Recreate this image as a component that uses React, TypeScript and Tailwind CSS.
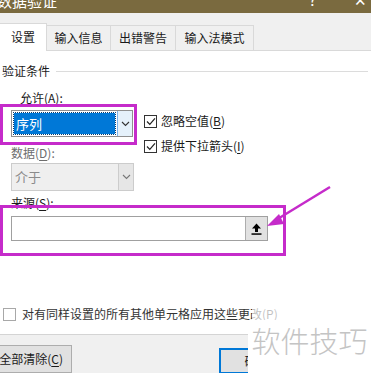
import React from 'react';

function Chevron({ color = '#333' }: { color?: string }) {
  return (
    <svg width="9" height="6" viewBox="0 0 9 6">
      <path d="M1 1 L4.5 4.5 L8 1" fill="none" stroke={color} strokeWidth="1.1" />
    </svg>
  );
}

function Check({ checked }: { checked: boolean }) {
  return (
    <span className="w-[13px] h-[13px] border border-[#333] bg-white flex items-center justify-center shrink-0">
      {checked && (
        <svg width="10" height="9" viewBox="0 0 10 9">
          <path d="M1 4.5 L3.8 7.3 L9 1.3" fill="none" stroke="#222" strokeWidth="1.2" />
        </svg>
      )}
    </span>
  );
}

function U({ c }: { c: string }) {
  return <span className="underline underline-offset-2">{c}</span>;
}

export default function App() {
  return (
    <div className="relative w-[371px] h-[373px] overflow-hidden bg-white font-['Noto_Sans_CJK_SC',sans-serif] text-[12px] text-[#1a1a1a]">
      {/* title bar */}
      <div className="h-[13px] bg-[#7a6a3f] overflow-hidden flex justify-between text-white">
        <span className="-mt-[9px] -ml-[3px] text-[15px] leading-[20px]">数据验证</span>
        <div className="flex -mt-[10px] text-[15px] leading-[20px]">
          <span className="mr-[38px]">?</span>
          <span className="mr-[4px]">✕</span>
        </div>
      </div>

      {/* tabs */}
      <div className="h-[38px] bg-[#f0f0f0] border-b border-[#d9d9d9] flex items-end">
        <div className="w-[47px] h-[28px] -mb-px bg-white border-t border-r border-[#d9d9d9] flex items-center justify-center pb-[2px]">
          设置
        </div>
        <div className="w-[64px] h-[25px] border-t border-r border-[#d9d9d9] flex items-center justify-center">输入信息</div>
        <div className="w-[65px] h-[25px] border-t border-r border-[#d9d9d9] flex items-center justify-center">出错警告</div>
        <div className="w-[78px] h-[25px] border-t border-r border-[#d9d9d9] flex items-center justify-center">输入法模式</div>
      </div>

      {/* content */}
      <div className="h-[283px] bg-white flex flex-col">
        <div className="mt-[13px] flex items-center pl-[2px] pr-[3px] h-[14px] leading-[14px]">
          <span>验证条件</span>
          <span className="flex-1 ml-[6px] border-t border-[#dcdcdc]" />
        </div>

        <div className="mt-[13px] pl-[20px] h-[14px] leading-[14px]">
          允许(<U c="A" />):
        </div>

        <div className="mt-[5px] flex pl-[11px]">
          <div className="w-[123px] flex flex-col">
            <div className="w-[122px] h-[27px] border border-[#8f8f8f] flex bg-white">
              <div className="flex-1 m-[2px] bg-[#0078d7] text-white flex items-center pl-[2px] outline-1 outline-dotted outline-[#0a3d6b] text-[13px]">
                序列
              </div>
              <div className="w-[15px] bg-[#e5f1fb] border-l border-[#7eb4ea] flex items-center justify-center">
                <Chevron />
              </div>
            </div>
            <div className="mt-[9px] h-[14px] leading-[14px] text-[#6d6d6d]">
              数据(<U c="D" />):
            </div>
            <div className="mt-[3px] w-[123px] h-[28px] border border-[#cccccc] bg-[#efefef] flex">
              <div className="flex-1 flex items-center pl-[3px] text-[#8a8a8a] text-[13px]">介于</div>
              <div className="w-[15px] border-l border-[#cccccc] bg-[#e6e6e6] flex items-center justify-center">
                <Chevron color="#777" />
              </div>
            </div>
          </div>

          <div className="ml-[10px] pt-[4px] flex flex-col gap-[11px]">
            <div className="flex items-center gap-[4px] h-[14px] leading-[14px]">
              <Check checked />
              <span>
                忽略空值(<U c="B" />)
              </span>
            </div>
            <div className="flex items-center gap-[4px] h-[14px] leading-[14px]">
              <Check checked />
              <span>
                提供下拉箭头(<U c="I" />)
              </span>
            </div>
          </div>
        </div>

        <div className="mt-[5px] pl-[11px] h-[14px] leading-[14px]">
          来源(<U c="S" />):
        </div>
        <div className="mt-[6px] ml-[11px] w-[257px] h-[25px] border border-[#a0a0a0] bg-white flex justify-end">
          <div className="w-[22px] h-full bg-[#e1e1e1] border-l border-[#adadad] flex items-center justify-center">
            <svg width="11" height="12" viewBox="0 0 11 12">
              <path d="M5.5 0.5 L10 5.5 L7 5.5 L7 9 L4 9 L4 5.5 L1 5.5 Z" fill="#000" />
              <rect x="0.5" y="10.3" width="10" height="1.5" fill="#000" />
            </svg>
          </div>
        </div>

        <div className="mt-[66px] pl-[3px] flex items-center gap-[6px] h-[14px] leading-[14px] text-[#333]">
          <span className="w-[13px] h-[13px] border border-[#a8a8a8] bg-white shrink-0" />
          <span>对有同样设置的所有其他单元格应用这些更改(P)</span>
        </div>
      </div>

      {/* button row */}
      <div className="h-[39px] border-t border-[#d4d4d4] bg-[#f0f0f0] flex items-start pt-[10px]">
        <div className="-ml-[10px] w-[82px] h-[28px] bg-[#e1e1e1] border border-[#adadad] flex items-center justify-end pr-[8px]">
          全部清除(<U c="C" />)
        </div>
        <div className="ml-[147px] mt-[3px] w-[75px] h-[26px] bg-[#e1e1e1] border-2 border-[#0078d7] flex items-center justify-center">
          确定
        </div>
      </div>

      {/* annotations */}
      <div className="absolute left-0 top-[104px] w-[137px] h-[41px] border-[3px] border-[#c52bca]" />
      <div className="absolute left-0 top-[205px] w-[286px] h-[51px] border-[3px] border-[#c52bca]" />
      <svg className="absolute left-0 top-0" width="371" height="373" viewBox="0 0 371 373">
        <line x1="330" y1="187" x2="276" y2="220" stroke="#c52bca" strokeWidth="2.5" />
        <polygon points="267,226 279,214 284,224" fill="#c52bca" />
      </svg>

      {/* watermark */}
      <div className="absolute left-[252px] top-[303px] w-[40px] h-[18px] bg-white/70" />
      <div className="absolute left-[248px] top-[320px] w-[123px] h-[53px] bg-white flex items-start justify-center pt-[2px]">
        <span className="text-[29px] leading-[36px] text-[#c4c4c4] font-light tracking-[0px]">软件技巧</span>
      </div>
    </div>
  );
}
